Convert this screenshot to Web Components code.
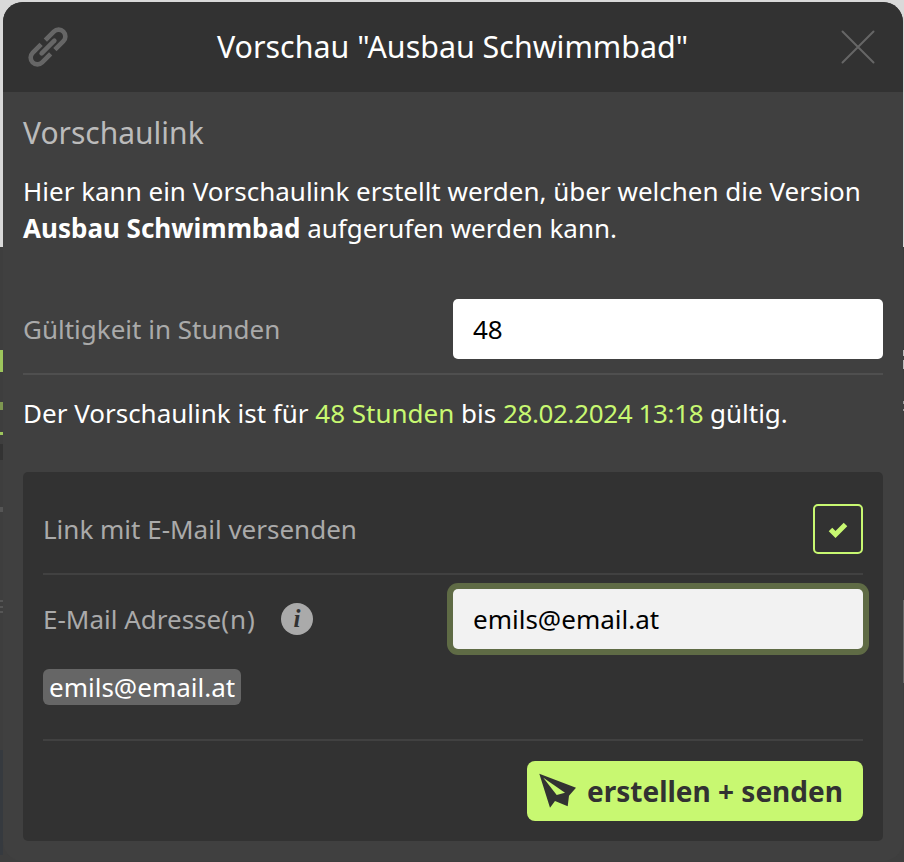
<!DOCTYPE html>
<html lang="de"><head><meta charset="utf-8"><title>Vorschau</title>
<style>
html,body{margin:0;height:862px;overflow:hidden}
body{font:26px/37px "Noto Sans",sans-serif;color:#fff;
background:
 linear-gradient(to bottom,transparent 350px,#9dc55c 350px 372px,transparent 372px 402px,#7d9650 402px 410px,transparent 410px 432px,#9dc55c 432px 435px,transparent 435px 444px,#333 444px 460px,transparent 460px 507px,#555 507px 512px,transparent 512px 600px,#555 600px 602px,transparent 602px 606px,#555 606px 608px,transparent 608px 611px,#555 611px 613px,transparent 613px 750px,#363a3f 750px 855px,transparent 855px) left top/3px 100% no-repeat,
 linear-gradient(to bottom,transparent 350px,#bbb 350px 356px,transparent 356px 360px,#bbb 360px 369px,transparent 369px 401px,#999 401px 404px,transparent 404px 409px,#999 409px 411px,transparent 411px 600px,#666 600px 683px,transparent 683px) right top/1px 100% no-repeat,
 linear-gradient(to bottom,#d9d9d9 0 247px,#3e3e3e 247px);
}
</style></head><body>
<template id="t-modal"><style>
:host{display:flex;flex-direction:column;box-sizing:border-box;width:900px;height:859px;margin:2px 0 0 3px;background:#404040;border-radius:20px;overflow:hidden}
header{flex:none;height:90px;background:#323232;display:flex;align-items:center;justify-content:space-between;padding:0 28px 0 25px}
h1{margin:0 4px 0 0;font:400 30.4px/40px "Noto Sans",sans-serif;color:#fff}
main{flex:1;padding:21px 20px 0;display:flex;flex-direction:column}
svg{display:block}
</style><header>
<svg width="40" height="40" viewBox="-20 -20 40 40" fill="none" stroke="#666" stroke-width="4.6"><g transform="rotate(-45)"><path d="M3-6.750H15a6.750 6.750 0 0 1 0 13.500H3"/><path d="M-3 6.750H-15a6.750 6.750 0 0 1 0-13.500H-3"/><path stroke-linecap="round" d="M-9 0H9"/></g></svg>
<h1><slot name="title"></slot></h1>
<svg width="34" height="34" viewBox="0 0 34 34" stroke="#666" stroke-width="2" stroke-linecap="round"><path d="M1.500 1.500 32.500 32.500M32.500 1.500 1.500 32.500"/></svg>
</header><main><slot></slot></main></template>

<template id="t-heading"><style>:host{display:block;font-size:30px;line-height:40px;color:#bbb}</style><slot></slot></template>
<template id="t-para"><style>:host{display:block;margin-top:20px}::slotted(b){font-weight:700}</style><slot></slot></template>

<template id="t-row"><style>
:host{display:flex;align-items:center;justify-content:space-between;color:#aaa}
:host([line]){border-bottom:2px solid var(--line,#4f4f4f)}
</style><slot name="label"></slot><slot></slot></template>

<template id="t-input"><style>
:host{display:block;box-sizing:border-box;width:430px;height:60px;padding:0 20px;background:#fff;color:#000;border-radius:5px;line-height:60px}
:host([focus]){width:410px;background:#f2f2f2;box-shadow:0 0 0 6px #5f6b45}
</style><slot></slot></template>

<template id="t-check"><style>
:host{display:flex;align-items:center;justify-content:center;box-sizing:border-box;width:50px;height:50px;border:2px solid #c8f871;border-radius:5px}
svg{overflow:visible;margin-top:2px}
</style><svg width="18" height="14" viewBox="0 0 18 14" fill="none" stroke="#c8f871" stroke-width="5"><path d="M1.500 6.500 6.500 11.500 16.500 1.500"/></svg></template>

<template id="t-info"><style>
:host{display:inline-flex;align-items:center;justify-content:center;width:32px;height:32px;border-radius:50%;background:#aaa;color:#323232;font:italic 700 25px/32px "Liberation Serif",serif}
</style>i</template>

<template id="t-chip"><style>
:host{display:inline-block;height:36px;line-height:36px;padding:0 6px;background:#666;color:#fff;border-radius:6px}
</style><slot></slot></template>

<template id="t-panel"><style>
:host{display:block;box-sizing:border-box;height:369px;margin-top:40px;padding:12px 20px 20px;background:#323232;border-radius:5px;--line:#414141}
</style><slot></slot></template>

<template id="t-button"><style>
:host{display:flex;align-items:center;box-sizing:border-box;height:60px;width:336px;padding-left:12px;gap:10px;background:#c8f871;border-radius:8px;color:#323232;font-size:28px;font-weight:700}
svg{display:block;flex:none}
</style><svg width="38" height="36" viewBox="0 0 38 36"><path fill="#323232" d="M0.300 0.700 37 14.700 30 22.700 28.700 33.300 16 28 11 34.700Z"/><path fill="#c8f871" d="M4.300 4.700 26 19.700 17.700 22Z"/></svg><slot></slot></template>

<x-modal>
  <span slot="title">Vorschau "Ausbau Schwimmbad"</span>
  <x-heading>Vorschaulink</x-heading>
  <x-para>Hier kann ein Vorschaulink erstellt werden, über welchen die Version <b>Ausbau Schwimmbad</b> aufgerufen werden kann.</x-para>
  <x-row line style="margin-top:35px;padding:17px 0 14px 0"><span slot="label">Gültigkeit in Stunden</span><x-input>48</x-input></x-row>
  <x-para style="margin-top:20px">Der Vorschaulink ist für <span style="color:#c8f871">48 Stunden</span> bis <span style="color:#c8f871;letter-spacing:-.37px">28.02.2024 13:18</span> gültig.</x-para>
  <x-panel>
    <x-row line style="padding:20px 0 19px"><span slot="label">Link mit E-Mail versenden</span><x-check></x-check></x-row>
    <x-row style="margin-top:14px"><span slot="label" style="display:flex;align-items:center;gap:25px"><span>E-Mail Adresse<span style="letter-spacing:1px">(n)</span></span><x-info></x-info></span><x-input focus>emils@email.at</x-input></x-row>
    <div style="margin-top:20px;padding-bottom:34px;border-bottom:2px solid #414141;display:flex"><x-chip>emils@email.at</x-chip></div>
    <div style="margin-top:20px;display:flex;justify-content:flex-end"><x-button>erstellen + senden</x-button></div>
  </x-panel>
</x-modal>
<script>
for (const [tag,tpl] of [['x-modal','t-modal'],['x-heading','t-heading'],['x-para','t-para'],['x-row','t-row'],['x-input','t-input'],['x-check','t-check'],['x-info','t-info'],['x-chip','t-chip'],['x-panel','t-panel'],['x-button','t-button']]) {
  customElements.define(tag, class extends HTMLElement {
    constructor(){super();this.attachShadow({mode:'open'}).appendChild(document.getElementById(tpl).content.cloneNode(true));}
  });
}
</script>
</body></html>
